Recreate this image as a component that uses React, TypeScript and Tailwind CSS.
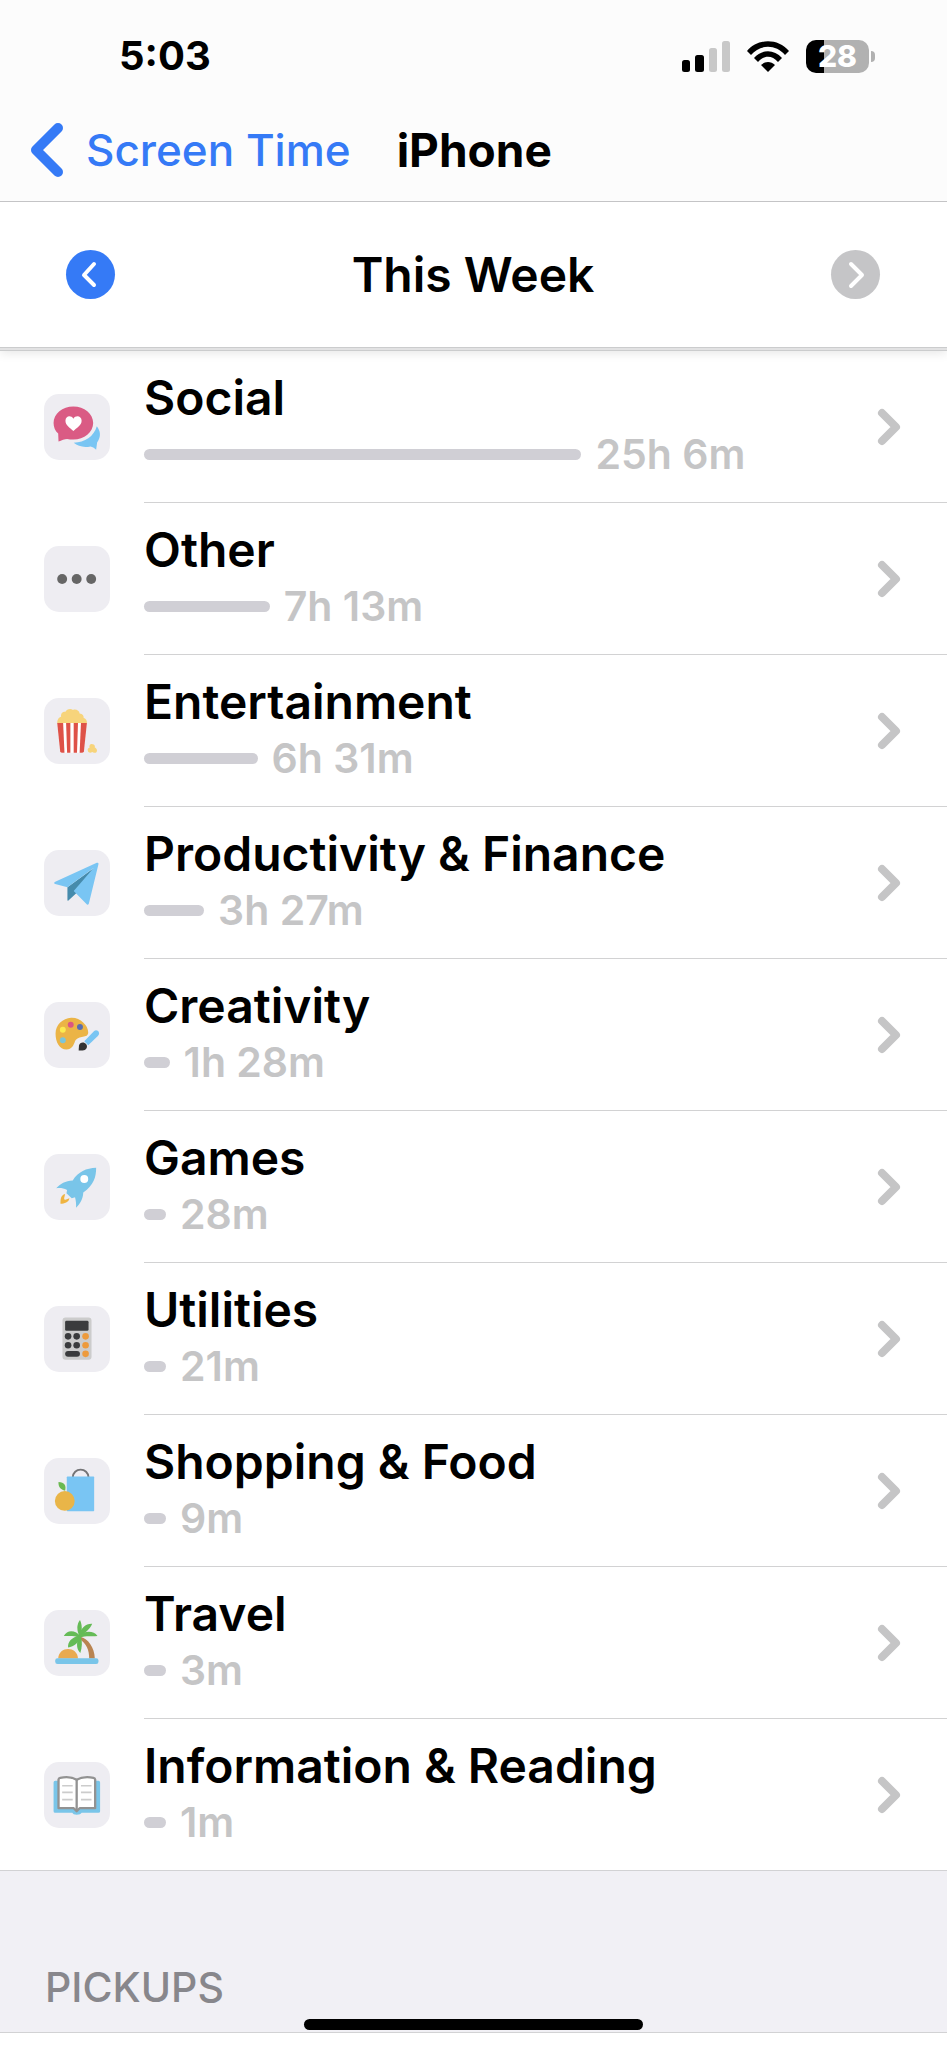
// Screen Time weekly breakdown: iOS-style status bar, navigation bar, week switcher and the list of
// app categories. Usage bars are scaled against the space beside the chevron.
import { type ReactNode } from 'react';

type Category = {
  name: string;
  minutes: number;
  icon: ReactNode;
};

// The longest bar takes this share of the row, the others follow in proportion.
const MAX_BAR_PERCENT = 60;

const formatDuration = (minutes: number): string => {
  const hours = Math.floor(minutes / 60);
  return hours > 0 ? `${hours}h ${minutes % 60}m` : `${minutes}m`;
};

// Category glyphs share a 200-unit canvas that fills the rounded tile.
const Glyph = ({ children }: { children: ReactNode }) => (
  <svg viewBox="0 0 200 200" className="size-full" aria-hidden="true">
    {children}
  </svg>
);

const SocialIcon = () => (
  <Glyph>
    <path
      fill="#79c5f3"
      d="M160 98C171 112 174 129 161 147L158 169C152 163 147 160 141 159C120 163 103 159 90 148C124 147 151 129 160 98Z"
    />
    <path
      fill="#da5b84"
      d="M89 38C122 38 149 60 149 88C149 116 122 138 89 138C82 138 76 137 70 136C63 136 53 140 44 144L43 120C34 112 29 101 29 88C29 60 56 38 89 38Z"
    />
    <path
      fill="#fff"
      d="M89 112C80 103 65 95 65 81C65 66 82 63 89 75C96 63 114 66 114 81C114 95 98 103 89 112Z"
    />
  </Glyph>
);

const OtherIcon = () => (
  <Glyph>
    <g fill="#666">
      <circle cx="55" cy="100" r="15" />
      <circle cx="99" cy="100" r="15" />
      <circle cx="143" cy="100" r="15" />
    </g>
  </Glyph>
);

const EntertainmentIcon = () => (
  <Glyph>
    <path
      fill="#f7d47b"
      d="M40 77C40 66 45 58 52 57C50 47 57 41 65 42C68 34 80 30 88 36C98 33 107 39 108 47C117 48 121 54 120 60C128 63 131 70 130 77Z"
    />
    <path fill="#fff" d="M40 76H130L120 166H50Z" />
    <g fill="#de5248">
      <path d="M40 76H58L62 166H55Q50 166 49 161Z" />
      <path d="M67 76H80V166H70Z" />
      <path d="M90 76H103L100 166H90Z" />
      <path d="M112 76H130L121 161Q120 166 115 166H108Z" />
    </g>
    <path
      fill="#f7d47b"
      d="M138 151C136 143 141 138 147 140C153 140 155 145 154 150C162 153 163 164 156 166C151 167 149 165 146 164C142 167 134 167 133 160C131 155 134 152 138 151Z"
    />
  </Glyph>
);

const ProductivityIcon = () => (
  <Glyph>
    <path fill="#468bac" d="M71 113L150 55L101 128L74 153Q71 156 71 151Z" />
    <path
      fill="#79c5f3"
      d="M160 39Q166 37 165 43L136 162Q133 169 128 163L90 124L151 54L71 113L34 103Q27 100 34 96Z"
    />
  </Glyph>
);

const CreativityIcon = () => (
  <Glyph>
    <path
      fill="#ebb446"
      d="M82 48C108 46 134 70 134 92C134 113 105 99 94 119C90 130 85 144 68 144C47 144 35 121 35 96C35 69 57 50 82 48Z"
    />
    <circle cx="57" cy="84" r="9" fill="#fceb50" />
    <circle cx="81" cy="69" r="9" fill="#dc5682" />
    <circle cx="109" cy="76" r="9" fill="#596eae" />
    <circle cx="57" cy="116" r="9" fill="#7cc5d8" />
    <path
      fill="#79c5f3"
      d="M152 88C157 83 164 86 166 91C169 97 165 102 160 106L134 131L122 119Z"
    />
    <path fill="#333" d="M105 147L106 132C108 122 121 119 128 128C134 137 127 147 117 147Z" />
  </Glyph>
);

const GamesIcon = () => (
  <Glyph>
    <path
      fill="#79c5e9"
      d="M158 42C158 70 151 94 119 117C118 137 109 152 97 163C98 153 97 143 94 131L84 134L68 119L70 109C58 103 47 102 37 104C49 90 65 81 87 80C104 54 128 43 158 42Z"
    />
    <circle cx="122" cy="76" r="12" fill="#fff" />
    <path
      fill="#efb441"
      d="M64 121C50 124 50 139 50 151C62 150 75 147 77 134L65 139Q60 139 61 134Z"
    />
  </Glyph>
);

const UtilitiesIcon = () => (
  <Glyph>
    <rect x="56" y="35" width="88" height="128" rx="9" fill="#ccc" />
    <g fill="#3a3b3d">
      <rect x="64" y="45" width="71" height="30" rx="4" />
      <circle cx="73" cy="92" r="10" />
      <circle cx="99" cy="92" r="10" />
      <circle cx="73" cy="119" r="10" />
      <circle cx="99" cy="119" r="10" />
      <rect x="64" y="136" width="45" height="18" rx="9" />
    </g>
    <g fill="#ed9a3b">
      <circle cx="126" cy="92" r="10" />
      <circle cx="126" cy="119" r="10" />
      <circle cx="126" cy="145" r="10" />
    </g>
  </Glyph>
);

const ShoppingIcon = () => (
  <Glyph>
    <path d="M87 60C87 27 135 27 135 60" fill="none" stroke="#747476" strokeWidth="6" />
    <rect x="69" y="56" width="83" height="105" rx="2" fill="#79c5f3" />
    <circle cx="63" cy="130" r="30" fill="#e9b548" />
    <path fill="#6ab951" d="M44 73C62 74 68 84 64 99C50 96 43 88 44 73Z" />
  </Glyph>
);

const TravelIcon = () => (
  <Glyph>
    <path fill="#e9aa50" d="M43 147C45 109 101 109 103 147Z" />
    <path fill="#b98451" d="M112 82C133 87 153 113 154 147H137C137 121 129 102 107 87Z" />
    <rect x="34" y="146" width="131" height="18" rx="7" fill="#79c5e9" />
    <g fill="#65bb56">
      <path d="M108 82C99 61 98 44 109 30C116 44 116 63 110 82Z" />
      <path d="M106 80C111 54 127 41 146 42C139 59 127 67 111 80Z" />
      <path d="M105 77C122 63 151 61 162 79C143 81 125 77 108 84Z" />
      <path d="M111 81C96 60 70 59 60 79C79 80 94 78 108 84Z" />
      <path d="M106 77C84 83 71 96 73 114C91 109 106 99 110 83Z" />
      <path d="M105 80C97 103 99 119 110 130C116 111 116 97 112 80Z" />
    </g>
  </Glyph>
);

const ReadingIcon = () => (
  <Glyph>
    <path
      fill="#79c5e9"
      d="M34 57H165Q170 57 170 62V149Q170 154 165 154H114Q111 160 99 160Q88 160 86 154H34Q29 154 29 149V62Q29 57 34 57Z"
    />
    <path
      fill="#fff"
      stroke="#929292"
      strokeWidth="7"
      strokeLinejoin="round"
      d="M99 54C83 44 65 45 49 48Q44 49 44 54V140H90L99 149L108 140H155V54Q155 49 150 48C134 45 116 44 99 54Z"
    />
    <path stroke="#929292" strokeWidth="7" d="M99 54V147" />
    <path
      stroke="#ccc"
      strokeWidth="5"
      d="M55 72H87M55 92H87M55 114H87M112 72H144M112 92H144M112 114H144"
    />
  </Glyph>
);

const categories: Category[] = [
  { name: 'Social', minutes: 1506, icon: <SocialIcon /> },
  { name: 'Other', minutes: 433, icon: <OtherIcon /> },
  { name: 'Entertainment', minutes: 391, icon: <EntertainmentIcon /> },
  { name: 'Productivity & Finance', minutes: 207, icon: <ProductivityIcon /> },
  { name: 'Creativity', minutes: 88, icon: <CreativityIcon /> },
  { name: 'Games', minutes: 28, icon: <GamesIcon /> },
  { name: 'Utilities', minutes: 21, icon: <UtilitiesIcon /> },
  { name: 'Shopping & Food', minutes: 9, icon: <ShoppingIcon /> },
  { name: 'Travel', minutes: 3, icon: <TravelIcon /> },
  { name: 'Information & Reading', minutes: 1, icon: <ReadingIcon /> },
];

const longest = Math.max(...categories.map((category) => category.minutes));

const StatusBar = () => (
  <div className="flex h-28 items-center justify-between pr-[72px] pl-[119px]">
    <time className="text-[40px] leading-[48px] font-bold">5:03</time>
    <div className="flex items-center gap-[17px]">
      <svg viewBox="0 0 48 31" className="h-[31px] w-12" role="img" aria-label="Signal">
        <rect y="19" width="8" height="12" rx="2.5" />
        <rect x="13" y="14" width="9" height="17" rx="2.5" />
        <rect x="27" y="7" width="8" height="24" rx="2.5" fill="#c8c8c8" />
        <rect x="40" width="8" height="31" rx="2.5" fill="#c8c8c8" />
      </svg>
      <svg viewBox="0 0 42 31" className="h-[31px] w-[42px]" role="img" aria-label="Wi-Fi">
        <path d="M0 10C11-3 31-3 42 10L38 14C29 3 13 3 4 14Z" />
        <path d="M7 17C15 8 27 8 35 17L31 21C25 14 17 14 11 21Z" />
        <path d="M14 24C18 20 24 20 28 24L21 31Z" />
      </svg>
      <div className="flex items-center gap-[2px]">
        <div className="flex h-[33px] w-[63px] items-center justify-center rounded-[10px] bg-linear-to-r from-black from-28% to-[#b1b1b1] to-28% text-[30px] leading-8 font-extrabold text-white">
          28
        </div>
        <div className="h-[11px] w-1 rounded-r-full bg-[#b1b1b1]" />
      </div>
    </div>
  </div>
);

const NavBar = () => (
  <nav className="flex h-[89px] items-start gap-[46px] pt-2 pl-[30px]">
    <a href="#screen-time" className="flex items-center gap-[23px] text-[#357af6]">
      <svg viewBox="0 0 33 54" className="h-[54px] w-[33px]" fill="none" aria-hidden="true">
        <path d="M28 5L6 27L28 49" stroke="currentColor" strokeWidth="10" strokeLinecap="round" strokeLinejoin="round" />
      </svg>
      <span className="text-[44px] leading-[60px] font-medium">Screen Time</span>
    </a>
    <h1 className="text-[46px] leading-[60px] font-bold">iPhone</h1>
  </nav>
);

const WeekSwitcher = () => (
  <div className="flex h-[145px] items-center justify-between bg-white pr-[67px] pl-[66px]">
    <button
      type="button"
      aria-label="Previous week"
      className="flex size-[49px] items-center justify-center rounded-full bg-[#357af6]"
    >
      <svg viewBox="0 0 49 49" className="size-full" fill="none" aria-hidden="true">
        <path d="M28 14L18 25L28 35" stroke="#fff" strokeWidth="4" strokeLinecap="round" strokeLinejoin="round" />
      </svg>
    </button>
    <h2 className="text-[48px] leading-[60px] font-semibold">This Week</h2>
    <button
      type="button"
      aria-label="Next week"
      disabled
      className="flex size-[49px] items-center justify-center rounded-full bg-[#c5c5c7]"
    >
      <svg viewBox="0 0 49 49" className="size-full" fill="none" aria-hidden="true">
        <path d="M20 14L31 25L20 36" stroke="#fff" strokeWidth="4" strokeLinecap="round" strokeLinejoin="round" />
      </svg>
    </button>
  </div>
);

const CategoryRow = ({ category }: { category: Category }) => (
  <li className="group">
    <a href="#category" className="flex items-stretch gap-[34px] pl-11">
      <span className="size-[66px] shrink-0 self-center rounded-[15px] bg-[#eeedf2]">{category.icon}</span>
      <div className="flex min-w-0 flex-1 items-center border-b border-[#d2d2d3] pr-[46px] group-last:border-b-0">
        <div className="min-w-0 flex-1 pt-[17px] pb-[22px]">
          <div className="text-[48px] leading-[60px] font-semibold whitespace-nowrap">{category.name}</div>
          <div className="flex h-[52px] items-center gap-[14px]">
            <span
              className="h-[11px] min-w-[22px] rounded-full bg-[#d0cfd5]"
              style={{ width: `${(category.minutes / longest) * MAX_BAR_PERCENT}%` }}
            />
            <span className="text-[41px] leading-[52px] font-semibold whitespace-nowrap text-[#c5c5c6]">
              {formatDuration(category.minutes)}
            </span>
          </div>
        </div>
        <svg viewBox="0 0 24 38" className="ml-1 h-[38px] w-6 shrink-0" fill="none" aria-hidden="true">
          <path d="M5 5L19 19L5 33" stroke="#c5c5c6" strokeWidth="8" strokeLinecap="round" strokeLinejoin="round" />
        </svg>
      </div>
    </a>
  </li>
);

export default function App() {
  return (
    <div className="min-h-screen bg-white font-[Inter,sans-serif] text-black">
      <header className="relative shadow-[0_2px_10px_rgba(0,0,0,0.1)]">
        <div className="border-b border-[#c4c4c6] bg-[#fcfcfc]">
          <StatusBar />
          <NavBar />
        </div>
        <WeekSwitcher />
        <div className="h-1 border-y border-[#cbcccd] bg-[#e2e2e3]" />
      </header>
      <main>
        <ul>
          {categories.map((category) => (
            <CategoryRow key={category.name} category={category} />
          ))}
        </ul>
        <section className="border-y border-[#d2d2d4] bg-[#f1f0f5] pt-[90px] pr-11 pb-[19px] pl-[45px]">
          <h2 className="text-[41px] leading-[52px] font-medium text-[#88878c] uppercase">Pickups</h2>
        </section>
      </main>
      <div className="fixed inset-x-0 bottom-[18px] flex justify-center">
        <div className="h-[11px] w-[339px] rounded-full bg-black" />
      </div>
    </div>
  );
}
